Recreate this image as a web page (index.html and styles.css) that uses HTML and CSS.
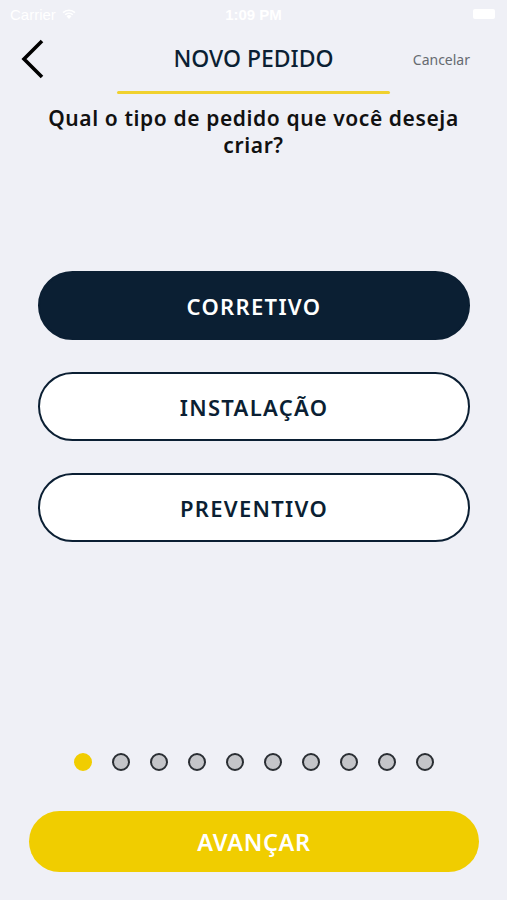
FILE: index.html
```html
<!DOCTYPE html>
<html lang="pt">
<head>
<meta charset="utf-8">
<link rel="stylesheet" href="styles.css">
</head>
<body>
<div class="screen">
  <div class="status">
    <span class="carrier">Carrier
      <svg class="wifi" width="16" height="12" viewBox="0 0 16 12"><path d="M8 11 L5.5 8.2 A3.6 3.6 0 0 1 10.5 8.2 Z M3.6 6.2 A6.3 6.3 0 0 1 12.4 6.2 L11.3 7.3 A4.8 4.8 0 0 0 4.7 7.3 Z M1.5 4.1 A9.3 9.3 0 0 1 14.5 4.1 L13.4 5.2 A7.8 7.8 0 0 0 2.6 5.2 Z" fill="#fff"/></svg>
    </span>
    <span class="time">1:09 PM</span>
    <span class="battery"></span>
  </div>
  <div class="nav">
    <svg class="back" width="28" height="44" viewBox="0 0 28 44"><path d="M23 4 L5 22 L23 40" fill="none" stroke="#000" stroke-width="3.6"/></svg>
    <div class="title">NOVO PEDIDO</div>
    <div class="cancel">Cancelar</div>
  </div>
  <div class="underline"></div>
  <h1 class="question">Qual o tipo de pedido que você deseja criar?</h1>
  <div class="options">
    <button class="opt selected">CORRETIVO</button>
    <button class="opt">INSTALAÇÃO</button>
    <button class="opt">PREVENTIVO</button>
  </div>
  <div class="spacer"></div>
  <div class="dots">
    <span class="dot active"></span>
    <span class="dot"></span>
    <span class="dot"></span>
    <span class="dot"></span>
    <span class="dot"></span>
    <span class="dot"></span>
    <span class="dot"></span>
    <span class="dot"></span>
    <span class="dot"></span>
    <span class="dot"></span>
  </div>
  <button class="next">AVANÇAR</button>
</div>
</body>
</html>
```

FILE: styles.css
```css
* { box-sizing: border-box; }
html, body { margin: 0; padding: 0; }
body {
  background: #eff0f6;
  font-family: "Noto Sans", "Open Sans", sans-serif;
  width: 507px;
  height: 900px;
  overflow: hidden;
}
.screen {
  display: flex;
  flex-direction: column;
  height: 900px;
}
.status {
  height: 28px;
  display: flex;
  align-items: center;
  justify-content: space-between;
  padding: 0 12px 0 10px;
  color: #fff;
  font-family: "Liberation Sans", sans-serif;
  font-size: 15px;
  position: relative;
}
.carrier { display: flex; align-items: center; gap: 5px; }
.time {
  position: absolute;
  left: 0; right: 0;
  text-align: center;
  font-weight: 600;
}
.battery {
  width: 22px; height: 10px;
  background: #fff;
  border-radius: 2px;
}
.nav {
  height: 60px;
  display: flex;
  align-items: center;
  position: relative;
  padding: 0 0 0 19px;
}
.back { display: block; margin-top: 2px; }
.title {
  position: absolute;
  left: 0; right: 0;
  text-align: center;
  font-size: 23px;
  font-weight: 500;
  color: #0b1f33;
  top: 14px;
  pointer-events: none;
}
.cancel {
  margin-left: auto;
  margin-right: 37px;
  font-size: 14px;
  color: #666a70;
  margin-top: 2px;
}
.underline {
  width: 273px;
  height: 3px;
  background: #f0d12e;
  margin: 3px 0 0 117px;
  border-radius: 2px;
}
.question {
  margin: 11px 42px 0 42px;
  text-align: center;
  font-size: 21px;
  line-height: 27px;
  font-weight: 600;
  letter-spacing: 0.6px;
  color: #111;
}
.options {
  margin-top: 112px;
  display: flex;
  flex-direction: column;
  gap: 32px;
  padding: 0 37px 0 38px;
}
.opt {
  height: 69px;
  border-radius: 35px;
  border: 2px solid #0b1f33;
  background: #fff;
  color: #0b1f33;
  font-family: inherit;
  font-size: 22px;
  font-weight: 600;
  letter-spacing: 1.3px;
}
.opt.selected {
  background: #0b1f33;
  color: #fff;
}
.spacer { flex: 1; }
.dots {
  display: flex;
  gap: 20px;
  padding-left: 74px;
  margin-bottom: 40px;
}
.dot {
  width: 18px; height: 18px;
  border-radius: 50%;
  background: #c4c5c9;
  border: 2px solid #2a2e33;
}
.dot.active {
  background: #f1cd00;
  border-color: #f1cd00;
}
.next {
  margin: 0 28px 28px 29px;
  height: 61px;
  border: none;
  border-radius: 31px;
  background: #f0cd00;
  color: #fff;
  font-family: inherit;
  font-size: 23.5px;
  font-weight: 600;
  letter-spacing: 0.6px;
}
```
